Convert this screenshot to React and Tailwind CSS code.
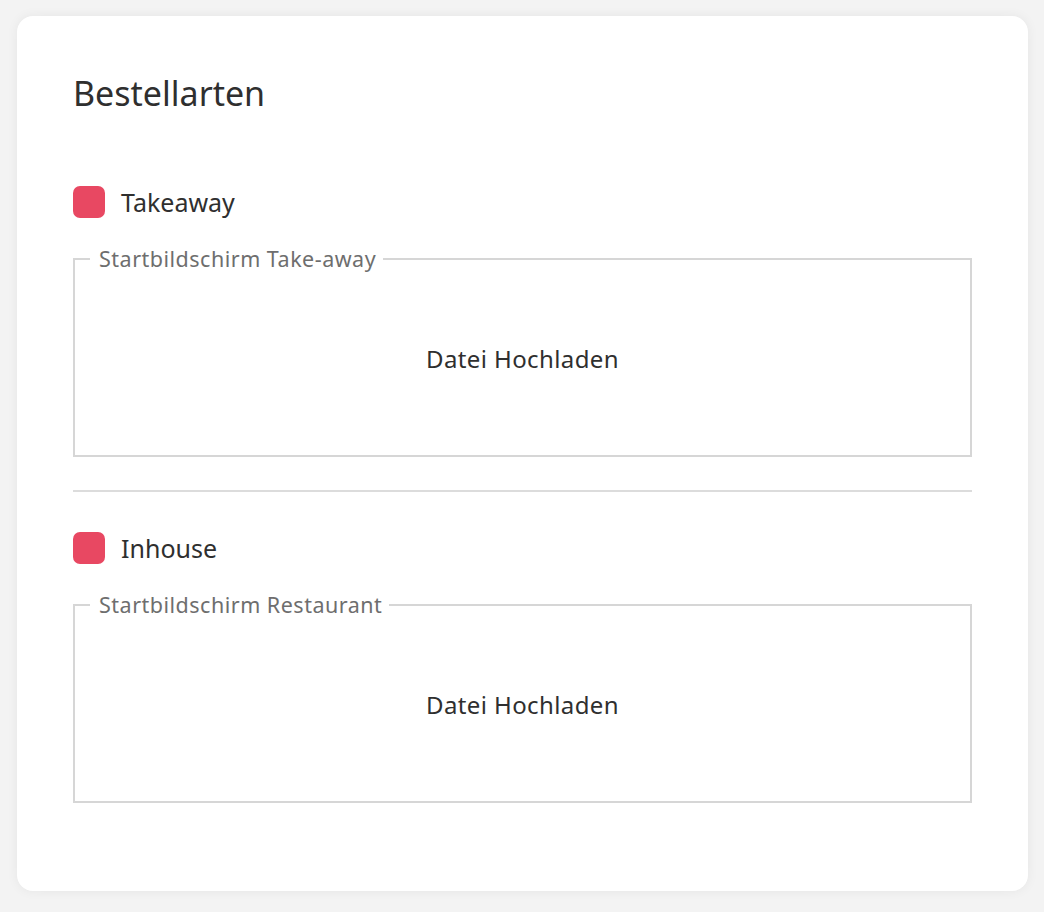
export default function App() {
  const Section = ({ label, legend }) => (
    <div>
      <div className="flex items-center gap-4 h-8">
        <div className="w-8 h-8 rounded-[7px] bg-[#e84862] shrink-0" />
        <span className="text-[25px] leading-none text-[#2f2f2f]">{label}</span>
      </div>
      <fieldset className="mt-[27px] border-2 border-[#d6d6d6] h-[212px]">
        <legend className="ml-[15px] pl-[9px] pr-[7px] text-[21.5px] tracking-[0.5px] leading-[28px] text-[#6e6e6e]">{legend}</legend>
        <div className="h-[172px] flex items-center justify-center text-[24px] tracking-[0.4px] text-[#2f2f2f]">Datei Hochladen</div>
      </fieldset>
    </div>
  );
  return (
    <div className="min-h-[912px] bg-[#f3f3f3] pt-4 pl-[17px] pr-4" style={{ fontFamily: '"Noto Sans", Lato, sans-serif' }}>
      <div className="w-[1011px] h-[875px] bg-white rounded-[16px] shadow-[0_0_12px_rgba(0,0,0,0.06)] px-[56px] pt-[57px]">
        <h1 className="text-[34px] leading-[40px] text-[#2f2f2f]">Bestellarten</h1>
        <div className="mt-[73px]">
          <Section label="Takeaway" legend="Startbildschirm Take-away" />
        </div>
        <div className="h-[2px] bg-[#dcdcdc] mt-[33px] mb-[40px]" />
        <Section label="Inhouse" legend="Startbildschirm Restaurant" />
      </div>
    </div>
  );
}
